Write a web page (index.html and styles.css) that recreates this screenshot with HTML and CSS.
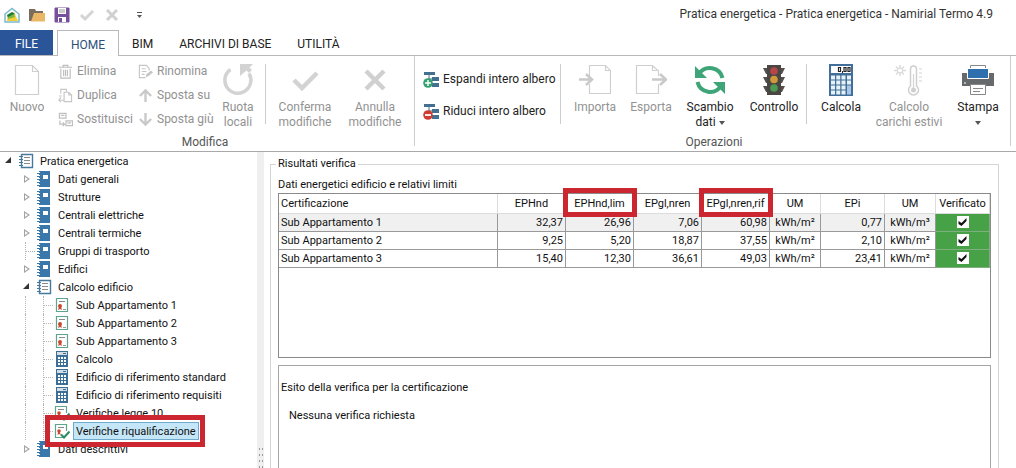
FILE: index.html
```html
<!DOCTYPE html>
<html lang="it">
<head>
<meta charset="utf-8">
<title>Pratica energetica - Namirial Termo 4.9</title>
<link rel="stylesheet" href="styles.css">
</head>
<body>
<svg class="defs" aria-hidden="true">
  <symbol id="i-book" viewBox="0 0 16 16"><path d="M3 0h11v16H3z" fill="#3a78ac"/><path d="M7 4h5v4H7z" fill="#fff"/><path d="M1 2.500h3M1 5.500h3M1 8.500h3M1 11.500h3M1 14.500h3" stroke="#3a78ac"/><path d="M3 1.500h1M3 4.500h1M3 7.500h1M3 10.500h1M3 13.500h1" stroke="#fff"/></symbol>
  <symbol id="i-note" viewBox="0 0 16 16"><path d="M3.500 1.500h11v13h-11z" fill="#fff" stroke="#47799c" stroke-width="1.400"/><path d="M6 4.500h6M6 7.500h6M6 10.500h6" stroke="#8a8a8a"/><path d="M1 3.500h4M1 6.500h4M1 9.500h4M1 12.500h4" stroke="#47799c"/></symbol>
  <symbol id="i-cert" viewBox="0 0 16 16"><path d="M2.500 1.500h11v13h-11z" fill="#fff" stroke="#5da58c" stroke-width="1.200"/><path d="M5 4.500h6" stroke="#8a8a8a"/><circle cx="6" cy="9" r="2" fill="#c9482f"/><path d="M5 10h2l1 3-2-1-2 1z" fill="#c9482f"/><path d="M9 12.500h3" stroke="#999"/></symbol>
  <symbol id="i-certok" viewBox="0 0 16 16"><path d="M11 14.500H1.500v-13h11V8" fill="#fff" stroke="#5da58c" stroke-width="1.200"/><path d="M4 4.500h6" stroke="#8a8a8a"/><circle cx="5" cy="8" r="1.800" fill="#c9482f"/><path d="M4.200 9h1.600l1 3-1.800-1-1.600 1z" fill="#c9482f"/><path d="M7 11.500l3 3 5.500-6" fill="none" stroke="#2c8a62" stroke-width="2"/></symbol>
  <symbol id="i-calc" viewBox="0 0 16 16"><path d="M2 0h12v16H2z" fill="#3c6f98"/><path d="M3 1h10v3H3z" fill="#d4dde4"/><path d="M9 2.500h3" stroke="#3c6f98"/><path d="M4 7h8M4 10h8M4 13h8" stroke="#fff" stroke-width="2" stroke-dasharray="2 1"/></symbol>
</svg>

<header class="titlebar">
  <div class="quick">
    <svg class="q-icon" viewBox="0 0 18 18"><path d="M2 16V8l7-5.500L16 8v8z" fill="#f4fbfb" stroke="#7fb9c9" stroke-width="1.500"/><path d="M4 15l1-6 6-3 4 9z" fill="#f1cf3b"/><path d="M4 9l5-3 3 2-7 4z" fill="#1f7a3a"/><path d="M5 11l6-3 1 3-7 2z" fill="#7fb53e"/></svg>
    <svg class="q-icon" viewBox="0 0 18 18"><path d="M1 15V3h6l1 2h7v10z" fill="#7b6c60"/><path d="M3 15.500L6 7h11v8.500z" fill="#e9b765"/></svg>
    <svg class="q-icon" viewBox="0 0 18 18"><path d="M2 2h14v14H2z" fill="#77509b" stroke="#77509b" stroke-width="1"/><path d="M5 2h8v6H5zM5 11h8v5H5z" fill="#fff"/><path d="M6 4h6M6 6h6" stroke="#9a9a9a"/><path d="M6 12h3v4H6z" fill="#77509b"/></svg>
    <svg class="q-icon" viewBox="0 0 18 18"><path d="M3 9l4 4 8-8" fill="none" stroke="#d4d4d4" stroke-width="3"/></svg>
    <svg class="q-icon" viewBox="0 0 18 18"><path d="M4 4l10 10M14 4L4 14" stroke="#d0d0d0" stroke-width="3"/></svg>
    <svg class="q-icon q-more" viewBox="0 0 18 18"><path d="M9 6.500h5" stroke="#555"/><path d="M9 9h5l-2.500 3z" fill="#555"/></svg>
  </div>
  <h1 class="app-title">Pratica energetica - Pratica energetica - Namirial Termo 4.9</h1>
</header>

<nav class="tabs">
  <button class="tab tab-file">FILE</button>
  <button class="tab tab-active">HOME</button>
  <button class="tab">BIM</button>
  <button class="tab">ARCHIVI DI BASE</button>
  <button class="tab">UTILITÀ</button>
</nav>

<section class="ribbon">
  <div class="group">
    <div class="group-body">
      <button class="big w54" disabled><svg class="b-icon" viewBox="0 0 32 32"><path d="M4.500 1.500h17l6 6v23h-23z M21.500 1.500v6h6" fill="#fff" stroke="#cfcfcf" stroke-width="1.200"/></svg><span>Nuovo</span></button>
      <div class="stack three w80">
        <button class="small" disabled><svg class="s-icon" viewBox="0 0 16 16"><path d="M1 3.500h14M5.500 3V1.500h5V3M3 5v10h10V5M6 6v7M8 6v7M10 6v7" fill="none" stroke="#bdbdbd" stroke-width="1.200"/></svg>Elimina</button>
        <button class="small" disabled><svg class="s-icon" viewBox="0 0 16 16"><path d="M3 6V1.500h6V4M6.500 4.500h5l3 3v7h-8zM11.500 4.500v3h3M1 8.500h3M1 13h5M3 10l-2 3 2 2" fill="none" stroke="#c6c6c6" stroke-width="1.200"/></svg>Duplica</button>
        <button class="small" disabled><svg class="s-icon" viewBox="0 0 16 16"><path d="M1.500 1.500h7v5h-7zM8.500 9.500h7v5h-7zM2 9v4h5M3 3.500h4M10 11.500h4M5 11l2 2-2 2" fill="none" stroke="#c0c0c0" stroke-width="1.300"/></svg>Sostituisci</button>
      </div>
      <div class="stack three w78">
        <button class="small" disabled><svg class="s-icon" viewBox="0 0 16 16"><path d="M12 7V5L9 1.500H1.500v13H8M4 5h4M4 8h5M4 11h3" fill="none" stroke="#c6c6c6" stroke-width="1.200"/><path d="M8 14l1-3 5-4 2 2-5 4z" fill="#c6c6c6"/></svg>Rinomina</button>
        <button class="small" disabled><svg class="s-icon" viewBox="0 0 16 16"><path d="M8 15V3M2 8.500L8 2.500l6 6" fill="none" stroke="#c9c9c9" stroke-width="2.500"/></svg>Sposta su</button>
        <button class="small" disabled><svg class="s-icon" viewBox="0 0 16 16"><path d="M8 1v12M2 7.500l6 6 6-6" fill="none" stroke="#c9c9c9" stroke-width="2.500"/></svg>Sposta giù</button>
      </div>
      <button class="big w52" disabled><svg class="b-icon" viewBox="0 0 32 32"><path d="M8.500 5.500A13 13 0 1 0 27 9.500" fill="none" stroke="#d3d3d3" stroke-width="3.500"/><path d="M18 0h13l-3.500 3.500L30 6l-3 3-2.500-2.500L18 12z" fill="#d3d3d3"/></svg><span>Ruota<br>locali</span></button>
      <i class="sep"></i>
      <button class="big w70" disabled><svg class="b-icon" viewBox="0 0 32 32"><path d="M5 16l8 8L28 9" fill="none" stroke="#d3d3d3" stroke-width="4.500"/></svg><span>Conferma<br>modifiche</span></button>
      <button class="big w70" disabled><svg class="b-icon" viewBox="0 0 32 32"><path d="M7 7l18 18M25 7L7 25" stroke="#d0d0d0" stroke-width="4.500"/></svg><span>Annulla<br>modifiche</span></button>
    </div>
    <div class="group-name">Modifica</div>
  </div>
  <div class="group">
    <div class="group-body">
      <div class="stack two w140">
        <button class="small"><svg class="t-icon" viewBox="0 0 16 16"><path d="M1 0h11v3H1zM9 5h7v4H9zM9 11h7v4H9z" fill="#44708f"/><path d="M6 3v10h4M6 7h4" fill="none" stroke="#44708f"/><circle cx="5" cy="11" r="4.800" fill="#35a06f"/><path d="M2 11h6M5 8v6" stroke="#fff" stroke-width="1.400"/></svg>Espandi intero albero</button>
        <button class="small"><svg class="t-icon" viewBox="0 0 16 16"><path d="M1 0h11v3H1zM9 5h7v4H9zM9 11h7v4H9z" fill="#44708f"/><path d="M6 3v10h4M6 7h4" fill="none" stroke="#44708f"/><circle cx="5" cy="11" r="4.800" fill="#cf3c31"/><path d="M2 11h6" stroke="#fff" stroke-width="1.800"/></svg>Riduci intero albero</button>
      </div>
      <i class="sep"></i>
      <button class="big w60" disabled><svg class="b-icon" viewBox="0 0 32 32"><path d="M10.500 12V1.500h16l5 5v23h-21V20M26.500 1.500v5h5" fill="none" stroke="#cfcfcf" stroke-width="1.200"/><path d="M0 15.500h11M7 10l6 5.500L7 21" fill="none" stroke="#c9c9c9" stroke-width="2.500"/></svg><span>Importa</span></button>
      <button class="big w52" disabled><svg class="b-icon" viewBox="0 0 32 32"><path d="M23.500 12V7l-6-5.500h-16v28h22V20M17.500 1.500v5h6" fill="none" stroke="#cfcfcf" stroke-width="1.200"/><path d="M17 15.500h12M25 10l6 5.500-6 5.500" fill="none" stroke="#c9c9c9" stroke-width="2.500"/></svg><span>Esporta</span></button>
      <button class="big w66"><svg class="b-icon" viewBox="0 0 32 32"><path d="M5 10a13 13 0 0 1 23.500 4M27 22A13 13 0 0 1 3.500 18" fill="none" stroke="#3da578" stroke-width="4"/><path d="M1 2v12h12zM31 30V18H19z" fill="#3da578"/></svg><span>Scambio<br>dati <i class="arrow"></i></span></button>
      <button class="big w62"><svg class="b-icon" viewBox="0 0 32 32"><path d="M5 4h22l-3 6H8zM5 13h22l-3 6H8zM5 22h22l-3 6H8z" fill="#55504b"/><path d="M9 1h14v30H9z" fill="#4a4643"/><circle cx="16" cy="7" r="3.800" fill="#b5474a"/><circle cx="16" cy="15.500" r="3.800" fill="#cf9a3c"/><circle cx="16" cy="24" r="3.800" fill="#4d9b52"/></svg><span>Controllo</span></button>
      <i class="sep"></i>
      <button class="big w60"><svg class="b-icon" viewBox="0 0 32 32"><path d="M4 0h24v32H4z" fill="#416f99"/><path d="M6 2h20v7H6z" fill="#fff"/><g fill="none" stroke="#222" stroke-width="1.200"><path d="M13.500 3.500h2v4h-2zM19 3.500h2v4h-2zM23 3.500h2v4h-2z"/></g><path d="M17 7h1v2h-1z" fill="#222"/><path d="M6 13.500h15M6 18.500h15M6 23.500h15M6 28.500h15" stroke="#e6f1f8" stroke-width="4" stroke-dasharray="4 1.250"/><path d="M22 11.500h4v4h-4zM22 16.500h4v4h-4z" fill="#e6f1f8"/><path d="M22 21.500h4v9h-4z" fill="#a9c8e8"/></svg><span>Calcola</span></button>
      <button class="big w76" disabled><svg class="b-icon" viewBox="0 0 32 32"><path d="M7 1v11M1 6.500h12M3 2.500l8 8M11 2.500l-8 8" stroke="#dadada" stroke-width="1.500"/><circle cx="7" cy="6.500" r="2.500" fill="#fff" stroke="#d4d4d4"/><path d="M17.500 22V5a3 3 0 0 1 6 0v17a5 5 0 1 1-6 0z" fill="#fff" stroke="#cfcfcf" stroke-width="1.500"/><circle cx="20.500" cy="26" r="2.500" fill="#cfcfcf"/><path d="M20.500 10v15M26 5h3M26 9h3M26 13h3M26 17h3" stroke="#d4d4d4" stroke-width="1.200"/></svg><span>Calcolo<br>carichi estivi</span></button>
      <button class="big w62"><svg class="b-icon" viewBox="0 0 32 32"><path d="M8.500 1.500h15v6h-15z" fill="#fff" stroke="#888"/><path d="M0 9h5v3h22V9h5v13H0z" fill="#666a6c"/><path d="M5.500 4.500h21v10h-21z" fill="#2f6fae" stroke="#fff"/><path d="M8.500 20.500h15v10h-15z" fill="#fff" stroke="#888"/><path d="M11 24.500h10M11 27.500h7" stroke="#888"/><path d="M2 19h2" stroke="#fff"/></svg><span>Stampa<br><i class="arrow"></i></span></button>
    </div>
    <div class="group-name">Operazioni</div>
  </div>
</section>

<div class="workspace">
  <ul class="tree">
    <li class="node l1 open"><i class="toggle"></i><svg class="n-icon"><use href="#i-note"/></svg><span class="label">Pratica energetica</span></li>
    <li class="node l2"><i class="toggle"></i><svg class="n-icon"><use href="#i-book"/></svg><span class="label">Dati generali</span></li>
    <li class="node l2"><i class="toggle"></i><svg class="n-icon"><use href="#i-book"/></svg><span class="label">Strutture</span></li>
    <li class="node l2"><i class="toggle"></i><svg class="n-icon"><use href="#i-book"/></svg><span class="label">Centrali elettriche</span></li>
    <li class="node l2"><i class="toggle"></i><svg class="n-icon"><use href="#i-book"/></svg><span class="label">Centrali termiche</span></li>
    <li class="node l2"><i class="branch"></i><svg class="n-icon"><use href="#i-book"/></svg><span class="label">Gruppi di trasporto</span></li>
    <li class="node l2"><i class="toggle"></i><svg class="n-icon"><use href="#i-book"/></svg><span class="label">Edifici</span></li>
    <li class="node l2 open"><i class="toggle"></i><svg class="n-icon"><use href="#i-note"/></svg><span class="label">Calcolo edificio</span></li>
    <li class="node l3"><i class="rail"></i><i class="branch"></i><svg class="n-icon"><use href="#i-cert"/></svg><span class="label">Sub Appartamento 1</span></li>
    <li class="node l3"><i class="rail"></i><i class="branch"></i><svg class="n-icon"><use href="#i-cert"/></svg><span class="label">Sub Appartamento 2</span></li>
    <li class="node l3"><i class="rail"></i><i class="branch"></i><svg class="n-icon"><use href="#i-cert"/></svg><span class="label">Sub Appartamento 3</span></li>
    <li class="node l3"><i class="rail"></i><i class="branch"></i><svg class="n-icon"><use href="#i-calc"/></svg><span class="label">Calcolo</span></li>
    <li class="node l3"><i class="rail"></i><i class="branch"></i><svg class="n-icon"><use href="#i-calc"/></svg><span class="label">Edificio di riferimento standard</span></li>
    <li class="node l3"><i class="rail"></i><i class="branch"></i><svg class="n-icon"><use href="#i-calc"/></svg><span class="label">Edificio di riferimento requisiti</span></li>
    <li class="node l3"><i class="rail"></i><i class="branch"></i><svg class="n-icon"><use href="#i-certok"/></svg><span class="label">Verifiche legge 10</span></li>
    <li class="node l3 marked"><i class="rail"></i><i class="branch"></i><svg class="n-icon"><use href="#i-certok"/></svg><span class="label selected">Verifiche riqualificazione</span></li>
    <li class="node l2"><i class="toggle"></i><svg class="n-icon"><use href="#i-book"/></svg><span class="label">Dati descrittivi</span></li>
  </ul>
  <div class="splitter"><i class="grip"></i></div>
  <main class="panel">
    <fieldset class="results">
      <legend>Risultati verifica</legend>
      <h2 class="caption">Dati energetici edificio e relativi limiti</h2>
      <div class="grid-box">
        <table class="grid">
          <colgroup><col><col class="c68"><col class="c68"><col class="c68"><col class="c68"><col class="c51"><col class="c64"><col class="c51"><col class="c54"></colgroup>
          <thead><tr><th class="first">Certificazione</th><th>EPHnd</th><th class="mark">EPHnd,lim</th><th>EPgl,nren</th><th class="mark">EPgl,nren,rif</th><th>UM</th><th>EPi</th><th>UM</th><th>Verificato</th></tr></thead>
          <tbody>
            <tr class="current"><td class="first">Sub Appartamento 1</td><td>32,37</td><td>26,96</td><td>7,06</td><td>60,98</td><td class="unit">kWh/m²</td><td>0,77</td><td class="unit">kWh/m³</td><td class="ok"><input type="checkbox" checked aria-label="Verificato Sub Appartamento 1"></td></tr>
            <tr><td class="first">Sub Appartamento 2</td><td>9,25</td><td>5,20</td><td>18,87</td><td>37,55</td><td class="unit">kWh/m²</td><td>2,10</td><td class="unit">kWh/m²</td><td class="ok"><input type="checkbox" checked aria-label="Verificato Sub Appartamento 2"></td></tr>
            <tr><td class="first">Sub Appartamento 3</td><td>15,40</td><td>12,30</td><td>36,61</td><td>49,03</td><td class="unit">kWh/m²</td><td>23,41</td><td class="unit">kWh/m²</td><td class="ok"><input type="checkbox" checked aria-label="Verificato Sub Appartamento 3"></td></tr>
          </tbody>
        </table>
      </div>
      <div class="outcome">
        <p class="outcome-title">Esito della verifica per la certificazione</p>
        <p class="outcome-text">Nessuna verifica richiesta</p>
      </div>
    </fieldset>
  </main>
</div>
</body>
</html>
```
FILE: styles.css
```css
*, *::before, *::after { box-sizing: border-box; }
body { margin: 0; height: 100vh; display: flex; flex-direction: column; overflow: hidden; background: #fff; color: #222; font: 12px/15px Roboto, "Open Sans", sans-serif; }
button { font: inherit; color: inherit; background: none; border: 0; padding: 0; margin: 0; }
ul, p, h1, h2 { margin: 0; padding: 0; font-size: inherit; font-weight: normal; }
i { display: block; flex: none; }
svg { display: block; flex: none; }
.defs { width: 0; height: 0; position: absolute; }

.titlebar { display: flex; justify-content: space-between; align-items: center; height: 30px; flex: none; padding: 0 23px 1px 3px; }
.quick { display: flex; gap: 7px; }
.q-icon { width: 18px; height: 18px; }
.app-title { color: #333; }

.tabs { display: flex; flex: none; height: 26px; border-bottom: 1px solid #b9b9b9; }
.tab { padding: 4px 13px 0; height: 25px; }
.tab-file { width: 53px; background: #2a5699; color: #fff; margin-right: 4px; }
.tab-active { width: 62px; height: 26px; padding-top: 3px; background: #fff; border: 1px solid #b9b9b9; border-bottom: 0; color: #2b4f7c; }

.ribbon { display: flex; flex: none; height: 96px; border-bottom: 1px solid #a9a9a9; }
.group { display: flex; flex-direction: column; height: 90px; border-right: 1px solid #cdcdcd; padding-right: 4px; }
.group + .group { padding: 0 1px 0 4px; }
.group-body { display: flex; height: 78px; flex: none; padding-top: 8px; }
.group-name { text-align: center; color: #555; }
.sep { width: 1px; height: 60px; background: #cdcdcd; margin: 0 4px 0 1px; }
.big { display: flex; flex-direction: column; align-items: center; gap: 4px; height: 67px; white-space: nowrap; }
.big span { display: block; text-align: center; }
.b-icon { width: 32px; height: 32px; }
button:disabled { color: #929292; }
.arrow { display: inline-block; vertical-align: middle; border: 3px solid transparent; border-top: 4px solid #555; border-bottom: 0; }
.stack { display: flex; flex-direction: column; padding-left: 4px; }
.three { gap: 9px; }
.two { gap: 17px; padding: 8px 0 0 4px; }
.small { display: flex; align-items: center; gap: 4px; height: 15px; white-space: nowrap; }
.s-icon { width: 15px; height: 15px; }
.t-icon { width: 16px; height: 16px; }
.w52 { width: 52px; } .w54 { width: 54px; } .w60 { width: 60px; } .w62 { width: 62px; } .w66 { width: 66px; }
.w70 { width: 70px; } .w76 { width: 76px; } .w78 { width: 78px; } .w80 { width: 80px; } .w140 { width: 140px; }
.group-name { padding-top: 1px; }

.workspace { display: flex; flex: 1; min-height: 0; font: 11px/14px Roboto, "Open Sans", sans-serif; color: #111; }
.tree { width: 257px; flex: none; list-style: none; }
.node { display: flex; align-items: center; height: 18px; position: relative; white-space: nowrap; }
.l2, .l3 { padding-left: 18px; }
.n-icon { width: 16px; height: 16px; }
.label { padding: 2px 2px 0; margin-left: 3px; border: 1px solid transparent; }
.selected { background: #c5e6f7; border-color: #6fa9cc; }
.toggle { width: 18px; height: 8px; }
.toggle::before { content: ""; display: block; width: 6px; height: 8px; margin-left: 6px; background: #a2a2a2; clip-path: polygon(0 0, 100% 50%, 0 100%, 0 0, 1px 2px, 1px 6px, 4px 50%, 1px 2px); }
.open > .toggle::before { margin-left: 5px; width: 6px; height: 6px; background: #333; clip-path: polygon(100% 0, 100% 100%, 0 100%); }
.branch { width: 10px; height: 18px; margin-left: 7px; margin-right: 1px; border-left: 1px dotted #b5b5b5; background: linear-gradient(90deg, #b5b5b5 50%, transparent 50%) 0 50% / 2px 1px repeat-x; }
.rail { width: 18px; height: 18px; }
.rail::before { content: ""; display: block; height: 18px; margin-left: 7px; border-left: 1px dotted #b5b5b5; }
.marked::after { content: ""; position: absolute; z-index: 1; left: 45px; top: -7px; width: 160px; height: 32px; border: 5px solid #cc2630; }

.splitter { width: 7px; flex: none; background: #efefef; position: relative; }
.grip { position: absolute; left: 1px; top: 294px; width: 6px; height: 26px; background: radial-gradient(circle, #9a9a9a 1px, transparent 1px) 0 0 / 3px 6px; }

.panel { flex: 1; min-width: 0; display: flex; padding: 5px 17px 0 6px; overflow: hidden; }
.results { flex: 1; min-width: 0; min-height: 0; margin: 0; padding: 6px 7px 0; border: 1px solid #d5d5d5; border-bottom: 0; display: flex; flex-direction: column; }
.results legend { padding: 0 2px; margin-left: -2px; }
.caption { line-height: 14px; padding-top: 1px; margin-bottom: 1px; }
.grid-box { flex: none; height: 165px; border: 1px solid #8a8a8a; }
.grid { width: 100%; table-layout: fixed; border-collapse: collapse; }
.c68 { width: 68px; } .c51 { width: 51px; } .c64 { width: 64px; } .c54 { width: 54px; }
.grid th { height: 19px; padding: 1px 0 0; font-weight: normal; border-right: 1px solid #dcdcdc; border-bottom: 1px solid #dcdcdc; position: relative; white-space: nowrap; }
.grid td { height: 18px; padding: 2px 2px 0; text-align: right; border-right: 1px solid #999; border-bottom: 1px solid #999; }
.grid .first { text-align: left; padding-left: 2px; }
.grid .unit { text-align: center; padding: 2px 0 0; }
.grid .ok { background: #46a147; text-align: center; padding: 0; border-color: #7fae7f; }
.current td { background: #f0f0f0; }
.mark::after { content: ""; position: absolute; z-index: 1; left: -3px; right: -4px; top: -6px; bottom: -4px; border: 5px solid #cc2630; }
.ok input { appearance: none; display: block; width: 12px; height: 12px; margin: 0 auto; background: #fff; }
.ok input:checked::before { content: ""; display: block; width: 12px; height: 12px; background: #111; clip-path: polygon(2px 5px, 5px 7px, 10px 2px, 10px 5px, 5px 10px, 2px 8px); }
.outcome { flex: 1; min-height: 0; margin-top: 7px; border: 1px solid #a6a6a6; border-bottom: 0; padding: 15px 2px 0; }
.outcome-text { padding: 14px 8px 0; }
```
